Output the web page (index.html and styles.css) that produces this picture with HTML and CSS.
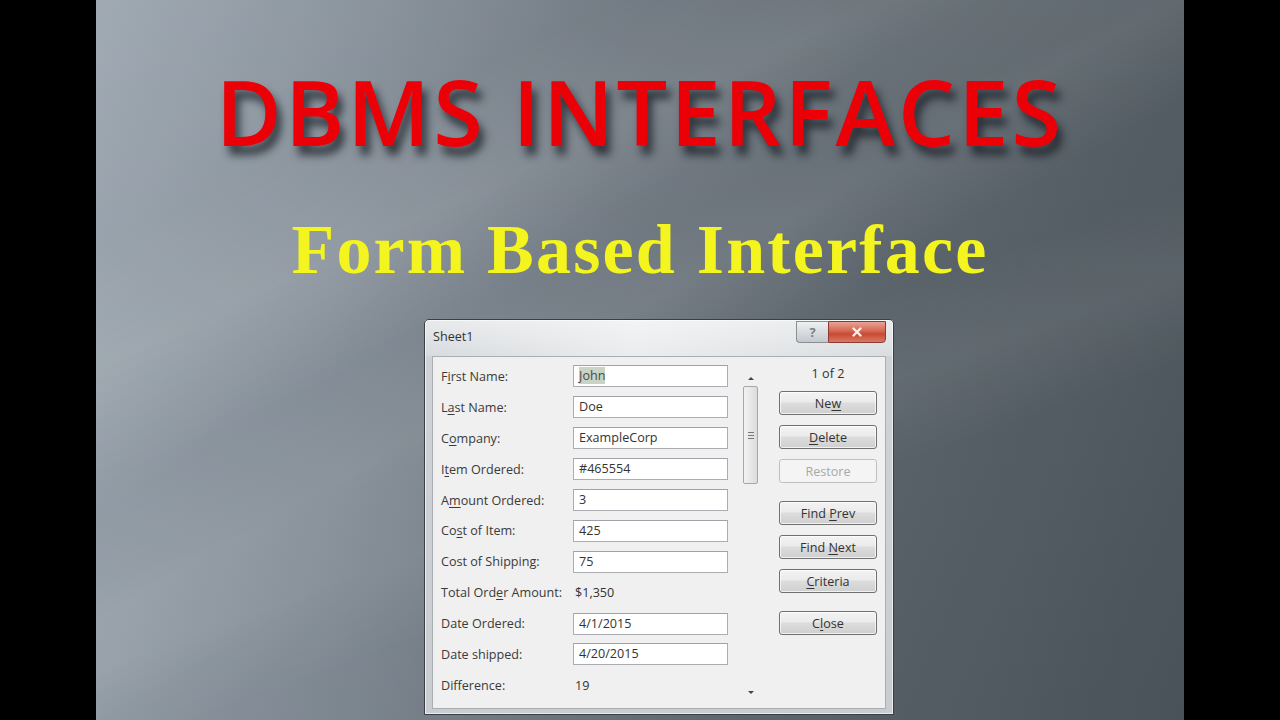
FILE: index.html
```html
<!DOCTYPE html>
<html>
<head>
<meta charset="utf-8">
<title>DBMS Interfaces</title>
<link rel="stylesheet" href="styles.css">
</head>
<body>
<div class="slide">
  <div class="streaks"></div>
  <h1 class="title">DBMS INTERFACES</h1>
  <h2 class="subtitle">Form Based Interface</h2>
  <div class="dialog">
    <div class="titlebar">
      <span class="caption">Sheet1</span>
      <div class="caption-buttons">
        <span class="btn-help">?</span>
        <span class="btn-close">
          <svg width="14" height="12" viewBox="0 0 14 12"><path d="M3.5 2.5 L10.5 9.5 M10.5 2.5 L3.5 9.5" stroke="#fbeee8" stroke-width="2.4" stroke-linecap="round"/></svg>
        </span>
      </div>
    </div>
    <div class="client">
      <div class="fields">
        <div class="row"><span class="lbl">F<u>i</u>rst Name:</span><span class="inp"><span class="sel">John</span></span></div>
        <div class="row"><span class="lbl">L<u>a</u>st Name:</span><span class="inp">Doe</span></div>
        <div class="row"><span class="lbl">C<u>o</u>mpany:</span><span class="inp">ExampleCorp</span></div>
        <div class="row"><span class="lbl">I<u>t</u>em Ordered:</span><span class="inp">#465554</span></div>
        <div class="row"><span class="lbl">A<u>m</u>ount Ordered:</span><span class="inp">3</span></div>
        <div class="row"><span class="lbl">Co<u>s</u>t of Item:</span><span class="inp">425</span></div>
        <div class="row"><span class="lbl">Cost of Shipping:</span><span class="inp">75</span></div>
        <div class="row"><span class="lbl">Total Ord<u>e</u>r Amount:</span><span class="val">$1,350</span></div>
        <div class="row"><span class="lbl">Date Ordered:</span><span class="inp">4/1/2015</span></div>
        <div class="row"><span class="lbl">Date shipped:</span><span class="inp">4/20/2015</span></div>
        <div class="row"><span class="lbl">Difference:</span><span class="val">19</span></div>
      </div>
      <div class="scrollbar">
        <span class="arrow up"></span>
        <div class="thumb"><span class="grip"></span></div>
        <span class="track"></span>
        <span class="arrow down"></span>
      </div>
      <div class="actions">
        <div class="counter">1 of 2</div>
        <span class="btn"><span>Ne<u>w</u></span></span>
        <span class="btn"><span><u>D</u>elete</span></span>
        <span class="btn disabled"><span>Restore</span></span>
        <span class="btn gap"><span>Find <u>P</u>rev</span></span>
        <span class="btn"><span>Find <u>N</u>ext</span></span>
        <span class="btn"><span><u>C</u>riteria</span></span>
        <span class="btn gap"><span>C<u>l</u>ose</span></span>
      </div>
    </div>
  </div>
</div>
</body>
</html>
```
FILE: styles.css
```css
html, body {
  margin: 0;
  padding: 0;
  background: #000;
  height: 720px;
  overflow: hidden;
}
body {
  display: flex;
  justify-content: center;
}
.slide {
  position: relative;
  width: 1088px;
  height: 720px;
  overflow: hidden;
  display: flex;
  flex-direction: column;
  align-items: center;
  background:
    linear-gradient(180deg, rgba(255,255,255,0.04) 0%, rgba(0,0,0,0.06) 100%),
    linear-gradient(90deg, #96a1ab 0%, #858f99 22%, #6c757e 48%, #5a636b 72%, #4e575e 100%);
}
.streaks {
  position: absolute;
  inset: 0;
  pointer-events: none;
  background:
    linear-gradient(155deg, transparent 20%, rgba(255,255,255,0.10) 30%, transparent 40%),
    linear-gradient(150deg, transparent 38%, rgba(255,255,255,0.08) 46%, transparent 54%),
    linear-gradient(160deg, transparent 52%, rgba(255,255,255,0.06) 60%, transparent 68%),
    linear-gradient(140deg, rgba(255,255,255,0.06) 0%, transparent 35%);
}
.title {
  position: relative;
  margin: 56px 0 0 0;
  font-family: "Open Sans", "Liberation Sans", sans-serif;
  font-weight: 600;
  font-size: 90px;
  line-height: 110px;
  color: #ec0008;
  letter-spacing: 3.1px;
  text-shadow: 5px 9px 8px rgba(20, 24, 30, 0.72);
  white-space: nowrap;
}
.subtitle {
  position: relative;
  margin: 42px 0 0 0;
  font-family: "Liberation Serif", "DejaVu Serif", serif;
  font-weight: 700;
  font-size: 70px;
  line-height: 84px;
  letter-spacing: 2.2px;
  color: #f4f41e;
  white-space: nowrap;
}
.dialog {
  position: relative;
  margin-top: 27px;
  margin-left: 38px;
  width: 468px;
  height: 394px;
  border: 1px solid #3c4044;
  border-radius: 5px 5px 0 0;
  background: linear-gradient(180deg, #e4e6e8 0%, #cfd3d7 10%, #c9cdd1 100%);
  box-shadow: inset 0 0 0 1px rgba(255,255,255,0.6);
  display: flex;
  flex-direction: column;
  font-family: "Open Sans", "DejaVu Sans", sans-serif;
  font-size: 12.6px;
  color: #333;
}
.titlebar {
  height: 36px;
  display: flex;
  justify-content: space-between;
  align-items: flex-start;
  padding: 0 7px 0 8px;
  background: linear-gradient(90deg, rgba(255,255,255,0.15), rgba(255,255,255,0.55) 45%, rgba(255,255,255,0.2));
}
.caption {
  margin-top: 8px;
  font-size: 12.6px;
  color: #333;
}
.caption-buttons {
  display: flex;
  margin-top: 1px;
}
.btn-help {
  width: 31px;
  height: 20px;
  border: 1px solid #8a8f94;
  border-right: none;
  border-radius: 0 0 0 4px;
  background: linear-gradient(180deg, #eef0f2, #c4c9ce);
  color: #7a8086;
  font-weight: 700;
  font-size: 13px;
  display: flex;
  align-items: center;
  justify-content: center;
}
.btn-close {
  width: 56px;
  height: 20px;
  border: 1px solid #8a3a30;
  border-radius: 0 0 4px 0;
  background: linear-gradient(180deg, #e8a494 0%, #d66652 45%, #c84a36 60%, #d87a62 100%);
  display: flex;
  align-items: center;
  justify-content: center;
}
.client {
  flex: 1;
  margin: 0 7px 5px 7px;
  background: #f0f0f0;
  border: 1px solid #a9aeb3;
  display: flex;
  padding: 4px 0 0 8px;
}
.fields {
  width: 288px;
  display: flex;
  flex-direction: column;
}
.row {
  height: 30.9px;
  display: flex;
  align-items: center;
}
.lbl {
  width: 132px;
  flex-shrink: 0;
  white-space: nowrap;
  color: #3a3a3a;
}
.inp {
  width: 148px;
  height: 20px;
  border: 1px solid #abadb3;
  border-top-color: #9fa2a8;
  background: #fff;
  padding-left: 5px;
  line-height: 20px;
  color: #333;
}
.sel {
  background: #c9d3c6;
  color: #4a4a4a;
}
.val {
  padding-left: 2px;
  color: #333;
}
.scrollbar {
  width: 17px;
  margin-left: 13px;
  margin-top: 10px;
  display: flex;
  flex-direction: column;
  align-items: center;
}
.arrow {
  width: 0;
  height: 0;
  border-left: 3px solid transparent;
  border-right: 3px solid transparent;
  margin: 6px 0;
}
.arrow.up { border-bottom: 3px solid #444; }
.arrow.down { border-top: 3px solid #444; margin-bottom: 14px; }
.thumb {
  width: 13px;
  height: 96px;
  border: 1px solid #a4a8ac;
  border-radius: 2px;
  background: linear-gradient(90deg, #f2f2f2, #dcdcdc);
  display: flex;
  align-items: center;
  justify-content: center;
}
.grip {
  width: 6px;
  height: 5px;
  border-top: 1px solid #777;
  border-bottom: 1px solid #777;
  background: linear-gradient(180deg, transparent 2px, #777 2px, #777 3px, transparent 3px);
}
.track { flex: 1; }
.actions {
  margin-left: 20px;
  width: 98px;
  display: flex;
  flex-direction: column;
  align-items: stretch;
}
.counter {
  height: 18px;
  line-height: 18px;
  text-align: center;
  color: #333;
  margin-top: 4px;
  margin-bottom: 8px;
}
.btn {
  height: 22px;
  margin-bottom: 10px;
  border: 1px solid #707070;
  border-radius: 3px;
  background: linear-gradient(180deg, #f3f3f3 0%, #ebebeb 45%, #dddddd 50%, #cfcfcf 100%);
  box-shadow: inset 0 0 0 1px rgba(255,255,255,0.7);
  display: flex;
  align-items: center;
  justify-content: center;
  color: #333;
}
.btn.disabled {
  border-color: #c0c0c0;
  background: #f4f4f4;
  color: #a8a8a8;
  box-shadow: none;
}
.btn.gap { margin-top: 8px; }
u { text-decoration-thickness: 1px; text-underline-offset: 2px; }
```
